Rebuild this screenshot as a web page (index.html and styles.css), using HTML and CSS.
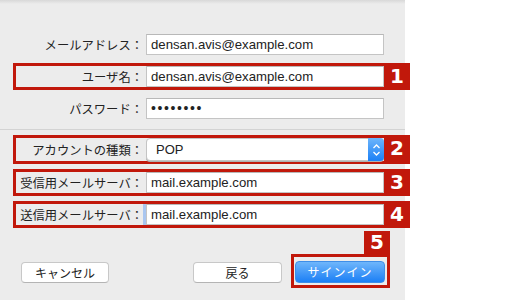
FILE: index.html
```html
<!DOCTYPE html>
<html lang="ja">
<head>
    <meta charset="UTF-8">
    <meta name="viewport" content="width=device-width, initial-scale=1.0">
    <title>アカウント設定</title>
    <link rel="stylesheet" href="styles.css">
</head>
<body>

    <div class="panel">
        <div class="section">
            <div class="row">
                <span class="label">メールアドレス：</span>
                <div class="field">densan.avis@example.com</div>
            </div>
            <div class="row marked">
                <span class="label">ユーザ名：</span>
                <div class="field">densan.avis@example.com</div>
                <span class="num">1</span>
            </div>
            <div class="row">
                <span class="label">パスワード：</span>
                <div class="field dots">••••••••</div>
            </div>
        </div>

        <div class="section">
            <div class="row marked">
                <span class="label">アカウントの種類：</span>
                <div class="select">
                    <span class="select-value">POP</span>
                    <span class="stepper">
                        <svg width="9" height="14" viewBox="0 0 9 14">
                            <path d="M1.5 5 L4.5 2 L7.5 5 M1.5 9 L4.5 12 L7.5 9" fill="none" stroke="#fff" stroke-width="1.3"/>
                        </svg>
                    </span>
                </div>
                <span class="num">2</span>
            </div>
            <div class="row marked">
                <span class="label">受信用メールサーバ：</span>
                <div class="field">mail.example.com</div>
                <span class="num">3</span>
            </div>
            <div class="row marked">
                <span class="label">送信用メールサーバ：</span>
                <div class="field focused">mail.example.com</div>
                <span class="num">4</span>
            </div>
        </div>

        <div class="actions">
            <button class="btn cancel">キャンセル</button>
            <button class="btn back">戻る</button>
            <div class="signin-wrap">
                <span class="num num-tag">5</span>
                <div class="signin-frame">
                    <button class="btn signin">サインイン</button>
                </div>
            </div>
        </div>
    </div>

</body>
</html>
```

FILE: styles.css
```css
:root {
    --red: #c1180b;
    --panel: #ececec;
    --text: #222222;
    --line: #c4c4c4;
    --white: #ffffff;
}

body {
    margin: 0;
    background-color: var(--white);
    font-family: "Noto Sans CJK JP", "Liberation Sans", sans-serif;
    color: var(--text);
}

.panel {
    width: 405px;
    height: 300px;
    background: linear-gradient(#d8d8d8, var(--panel) 4px);
}

.section {
    display: flex;
    flex-direction: column;
    gap: 5px;
    padding-top: 31px;
    padding-bottom: 7px;
    border-bottom: 1px solid #d3d3d3;
}

.section + .section {
    padding-top: 5px;
    padding-bottom: 0;
    border-bottom: none;
}

/* one form row; the marked ones get the red frame */
.row {
    display: flex;
    align-items: center;
    width: 394px;
    margin-left: 13px;
    border: 3px solid transparent;
    border-right: none;
}

.row.marked {
    border-color: var(--red);
}

.label {
    width: 127px;
    text-align: right;
    font-size: 12.3px;
    white-space: nowrap;
}

.field {
    box-sizing: border-box;
    width: 238px;
    height: 21px;
    margin-left: 3px;
    padding-left: 4px;
    background-color: var(--white);
    border: 1px solid var(--line);
    border-top-color: #b8b8b8;
    font-family: "Liberation Sans", Arial, sans-serif;
    font-size: 13.2px;
    line-height: 19px;
    color: var(--text);
}

.field.dots {
    font-size: 14px;
    letter-spacing: 1.6px;
}

.field.focused {
    box-shadow: -3px 0 0 #a9c6f0;
}

.select {
    box-sizing: border-box;
    display: flex;
    align-items: stretch;
    width: 238px;
    height: 23px;
    margin-left: 3px;
    background-color: var(--white);
    border: 1px solid var(--line);
    border-radius: 4px;
    box-shadow: 0 1px 0 #b0b0b0;
}

.select-value {
    flex: 1;
    padding-left: 9px;
    font-family: "Liberation Sans", Arial, sans-serif;
    font-size: 13px;
    line-height: 21px;
}

.stepper {
    display: flex;
    align-items: center;
    justify-content: center;
    width: 16px;
    margin: -1px -1px -1px 0;
    background: linear-gradient(#6db5fb, #1b80f6);
    border-radius: 0 4px 4px 0;
}

.num {
    align-self: stretch;
    width: 26px;
    margin-left: auto;
    background-color: var(--red);
    color: var(--white);
    font-family: "DejaVu Sans", sans-serif;
    font-weight: bold;
    font-size: 20px;
    line-height: 21px;
    text-align: center;
}

.actions {
    display: flex;
    align-items: flex-end;
    margin-top: 3px;
    padding-left: 21px;
}

.btn {
    box-sizing: border-box;
    height: 21px;
    margin: 0 0 5px 0;
    padding: 0;
    background-color: var(--white);
    border: 1px solid #c8c8c8;
    border-bottom-color: #b4b4b4;
    border-radius: 4px;
    font-family: "Noto Sans CJK JP", sans-serif;
    font-size: 12px;
    color: var(--text);
}

.cancel {
    width: 88px;
}

.back {
    width: 89px;
    margin-left: 84px;
}

.signin-wrap {
    display: flex;
    flex-direction: column;
    align-items: flex-end;
    margin-left: 9px;
}

.num-tag {
    height: 23px;
    line-height: 23px;
}

.signin-frame {
    padding: 1px 2px 2px 1px;
    border: 3px solid var(--red);
}

.signin {
    width: 90px;
    height: 22px;
    margin: 0;
    background: linear-gradient(#6fb6fb, #1c7ff5);
    border: 1px solid #3f8ee8;
    color: var(--white);
    letter-spacing: 1px;
}
```
